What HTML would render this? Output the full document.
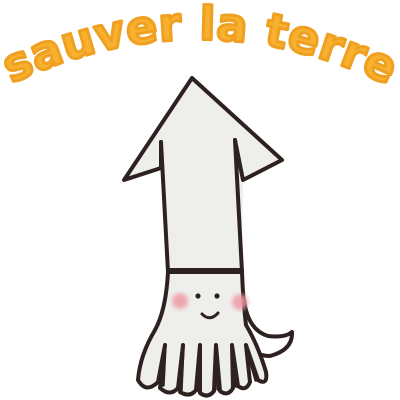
<!DOCTYPE html>
<html><head><style>
html,body{margin:0;padding:0;background:#fff;width:400px;height:400px;overflow:hidden}
</style></head><body>
<svg width="400" height="400" viewBox="0 0 400 400">
<defs>
<path id="arc" d="M2,88 Q200,-10 398,90"/>
<filter id="bl"><feGaussianBlur stdDeviation="2"/></filter>
</defs>
<text font-family="'DejaVu Sans','Liberation Sans',sans-serif" font-weight="bold" font-size="46" fill="#f8b02f" stroke="#f0a020" stroke-width="3" stroke-linejoin="round" letter-spacing="0.5">
<textPath href="#arc" startOffset="50%" text-anchor="middle">sauver la terre</textPath>
</text>
<g stroke="#2e2220" stroke-width="4" stroke-linecap="round" stroke-linejoin="round" fill="#eeeeec">
<path d="M192,78 L124,180 L161,168 L168,272 L242,272 L243,180 L282,160 Z" stroke="none"/>
<path d="M161,142 L161,168 L124,180 L192,78 L282,160 L243,180 L235,140"/>
<path d="M161,142 L168,272"/>
<path d="M235,140 L242,272"/>
<path d="M168,270 L242,270"/>
<path d="M244,300 Q248,330 268,336 Q285,338 292,332 Q293,350 270,356 Q256,356 250,345" fill="#fff"/>
<path d="M168,272 Q166,310 155,330 Q140,355 138,380 Q146,394 158,382 L165,345 L160,388 Q170,397 178,388 L183,345 L180,392 Q190,398 196,390 L200,345 L200,393 Q208,399 214,391 L216,345 L220,391 Q228,397 233,388 L232,345 L238,386 Q246,392 250,382 L246,345 L258,380 Q268,386 266,372 Q258,345 246,325 Q243,300 242,272 Z"/>
<g fill="none" stroke-width="3.5">
<path d="M165,345 L163,385"/><path d="M183,345 L181,390"/><path d="M200,345 L199,391"/><path d="M216,345 L218,389"/><path d="M232,345 L236,386"/><path d="M246,345 L256,380"/>
</g>
</g>
<g filter="url(#bl)">
<circle cx="180" cy="301" r="8" fill="#ee9aa4" opacity="0.85"/>
<circle cx="240" cy="302" r="8" fill="#ee9aa4" opacity="0.85"/>
</g>
<circle cx="198" cy="296" r="2.6" fill="#2e2220"/>
<circle cx="217" cy="296" r="2.6" fill="#2e2220"/>
<path d="M202,314 Q210,322 218,313" fill="none" stroke="#2e2220" stroke-width="3" stroke-linecap="round"/>
</svg>
</body></html>
